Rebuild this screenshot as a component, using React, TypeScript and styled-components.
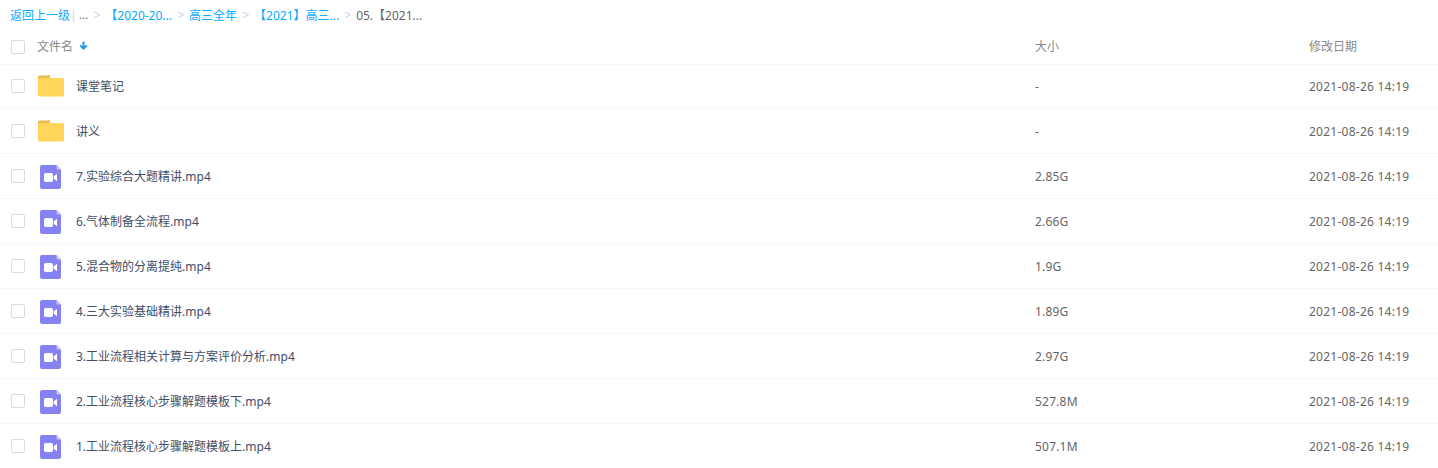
import React from "react";
import styled, { createGlobalStyle } from "styled-components";

const Global = createGlobalStyle`
  html, body { margin: 0; padding: 0; background: #fff; }
  body { font-family: "Noto Sans", "Noto Sans CJK SC", sans-serif; font-size: 12px; color: #424e67; overflow: hidden; }
`;

const Page = styled.div`
  width: 1438px;
  height: 468px;
  overflow: hidden;
`;

const Crumbs = styled.div`
  display: flex;
  align-items: center;
  height: 29px;
  padding-left: 10px;
  white-space: nowrap;
`;
const CrumbLink = styled.span`
  color: #09aaff;
`;
const Bar = styled.span`
  color: #c4d8f4;
  margin: 0 2px 0 0;
`;
const Dots = styled.span`
  color: #878c9c;
`;
const Sep = styled.span`
  color: #c4d8f4;
  width: 17px;
  text-align: center;
  font-family: "Liberation Sans", sans-serif;
  font-size: 12px;
`;
const Current = styled.span`
  color: #666;
`;

const gridCols = `1024px 274px 1fr`;

const HeadRow = styled.div`
  display: grid;
  grid-template-columns: ${gridCols};
  align-items: center;
  height: 35px;
  border-bottom: 1px solid #f2f6fd;
  padding-left: 11px;
  color: #888;
`;
const HeadLabel = styled.span`
  margin-bottom: 2px;
`;
const Row = styled.div`
  display: grid;
  grid-template-columns: ${gridCols};
  align-items: center;
  height: 44px;
  border-bottom: 1px solid #f2f6fd;
  padding-left: 11px;
  &:nth-of-type(3) {
    height: 42px;
    padding-bottom: 1px;
  }
`;
const NameCell = styled.div`
  display: flex;
  align-items: center;
`;
const Check = styled.span`
  display: block;
  box-sizing: border-box;
  width: 14px;
  height: 14px;
  border: 1px solid #d5dce6;
  border-radius: 2px;
  background: #fff;
`;
const HeadName = styled.span`
  margin-left: 12px;
  margin-bottom: 2px;
  display: flex;
  align-items: center;
  gap: 6px;
`;
const IconBox = styled.span`
  width: 26px;
  margin-left: 13px;
  display: flex;
  justify-content: flex-start;
`;
const VideoSvg = styled.svg`
  margin-left: 2px;
  margin-top: 2px;
`;
const FileName = styled.span`
  margin-left: 12px;
  color: #424e67;
`;
const Size = styled.span`
  color: #666;
  letter-spacing: 0.2px;
`;
const DateCell = styled.span`
  color: #666;
  letter-spacing: 0.25px;
`;

const Folder = () => (
  <svg width="26" height="22" viewBox="0 0 26 22">
    <path d="M0 2a1.5 1.5 0 0 1 1.5-1.5h8A1.5 1.5 0 0 1 12 2v2H0z" fill="#e8bc4e" />
    <rect x="0" y="3" width="26" height="18.5" rx="1.5" fill="#ffd659" />
  </svg>
);

const Video = () => (
  <VideoSvg width="21" height="24" viewBox="0 0 21 24">
    <path d="M2 0h14.5L21 4.5V22a2 2 0 0 1-2 2H2a2 2 0 0 1-2-2V2a2 2 0 0 1 2-2z" fill="#8582f3" />
    <path d="M16.5 0L21 4.5h-3a1.5 1.5 0 0 1-1.5-1.5z" fill="#c9c7fa" />
    <rect x="4" y="8" width="9" height="9" rx="1.8" fill="#fff" />
    <path d="M13.6 11.5l3.4-2.7v7.4l-3.4-2.7z" fill="#fff" />
  </VideoSvg>
);

const rows: { name: string; size: string; folder?: boolean }[] = [
  { name: "课堂笔记", size: "-", folder: true },
  { name: "讲义", size: "-", folder: true },
  { name: "7.实验综合大题精讲.mp4", size: "2.85G" },
  { name: "6.气体制备全流程.mp4", size: "2.66G" },
  { name: "5.混合物的分离提纯.mp4", size: "1.9G" },
  { name: "4.三大实验基础精讲.mp4", size: "1.89G" },
  { name: "3.工业流程相关计算与方案评价分析.mp4", size: "2.97G" },
  { name: "2.工业流程核心步骤解题模板下.mp4", size: "527.8M" },
  { name: "1.工业流程核心步骤解题模板上.mp4", size: "507.1M" },
];

export default function App() {
  return (
    <Page>
      <Global />
      <Crumbs>
        <CrumbLink>返回上一级</CrumbLink>
        <Bar>|</Bar>
        <Dots>...</Dots>
        <Sep>&gt;</Sep>
        <CrumbLink>【2020-20...</CrumbLink>
        <Sep>&gt;</Sep>
        <CrumbLink>高三全年</CrumbLink>
        <Sep>&gt;</Sep>
        <CrumbLink>【2021】高三...</CrumbLink>
        <Sep>&gt;</Sep>
        <Current>05.【2021...</Current>
      </Crumbs>
      <HeadRow>
        <NameCell>
          <Check />
          <HeadName>
            文件名
            <svg width="9" height="9" viewBox="0 0 9 9">
              <path d="M4.5 0.5v7M1.2 4.4l3.3 3.3 3.3-3.3" fill="none" stroke="#1a9df0" strokeWidth="2" />
            </svg>
          </HeadName>
        </NameCell>
        <HeadLabel>大小</HeadLabel>
        <HeadLabel>修改日期</HeadLabel>
      </HeadRow>
      {rows.map((r) => (
        <Row key={r.name}>
          <NameCell>
            <Check />
            <IconBox>{r.folder ? <Folder /> : <Video />}</IconBox>
            <FileName>{r.name}</FileName>
          </NameCell>
          <Size>{r.size}</Size>
          <DateCell>2021-08-26 14:19</DateCell>
        </Row>
      ))}
    </Page>
  );
}
